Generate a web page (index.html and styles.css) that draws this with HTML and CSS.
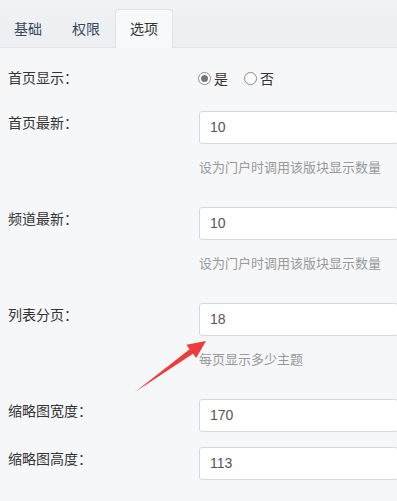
FILE: index.html
```html
<!DOCTYPE html>
<html lang="zh-CN">

<head>
 <meta charset="UTF-8">
 <meta name="viewport" content="width=device-width, initial-scale=1.0">
 <title>版块设置 - 选项</title>
 <link rel="stylesheet" href="styles.css">
</head>

<body>
 <div class="tabs">
  <div class="tab">基础</div>
  <div class="tab">权限</div>
  <div class="tab active">选项</div>
 </div>

 <div class="form">
  <!-- 首页显示 -->
  <div class="row row-radio">
   <div class="label">首页显示：</div>
   <div class="control radios">
    <span class="radio checked"></span><span class="radio-text">是</span>
    <span class="radio"></span><span class="radio-text">否</span>
   </div>
  </div>

  <div class="row with-help">
   <div class="label">首页最新：</div>
   <div class="control">
    <div class="input">10</div>
    <div class="help">设为门户时调用该版块显示数量</div>
   </div>
  </div>

  <div class="row with-help">
   <div class="label">频道最新：</div>
   <div class="control">
    <div class="input">10</div>
    <div class="help">设为门户时调用该版块显示数量</div>
   </div>
  </div>

  <div class="row with-help">
   <div class="label">列表分页：</div>
   <div class="control">
    <div class="input">18</div>
    <div class="help">每页显示多少主题</div>
   </div>
  </div>

  <div class="row">
   <div class="label">缩略图宽度：</div>
   <div class="control">
    <div class="input">170</div>
   </div>
  </div>

  <div class="row">
   <div class="label">缩略图高度：</div>
   <div class="control">
    <div class="input">113</div>
   </div>
  </div>
 </div>

 <!-- annotation arrow -->
 <svg class="arrow" width="397" height="501" viewBox="0 0 397 501">
  <polygon points="135,392 189.6,349.3 186.4,344.8 206,341 196.2,358 193,353.7" fill="#ee3b3b" />
 </svg>
</body>

</html>
```

FILE: styles.css
```css
body {
 margin: 0;
 background: #f6f7f9;
 font-family: "Liberation Sans", "Noto Sans CJK SC", sans-serif;
 font-size: 14px;
 color: #333;
 overflow: hidden;
}

.tabs {
 display: flex;
 align-items: flex-end;
 height: 48px;
 background: linear-gradient(#f1f2f4, #eceef1);
 border-bottom: 1px solid #e3e5e8;
 box-sizing: border-box;
}

.tab {
 width: 58px;
 height: 38px;
 line-height: 38px;
 text-align: center;
 color: #34495e;
 box-sizing: border-box;
 border: 1px solid transparent;
 border-bottom: none;
}

.tab:first-child {
 width: 57px;
 padding-right: 1px;
}

.tab.active {
 background: #f8f9fb;
 border-color: #e1e3e6;
 border-radius: 4px 4px 0 0;
 color: #333;
 height: 39px;
 margin-bottom: -1px;
}

.form {
 padding: 20px 0 0 8px;
}

.row {
 display: flex;
 margin-bottom: 15px;
}

.row.with-help {
 margin-bottom: 29px;
}

.row-radio {
 margin-bottom: 23px;
}

.label {
 width: 191px;
 flex: none;
 line-height: 20px;
 padding-top: 2px;
}

.row-radio .label {
 padding-top: 0;
}

.control {
 flex: 1;
 min-width: 0;
}

.radios {
 display: flex;
 align-items: center;
 height: 20px;
 margin-left: -1px;
}

.radio {
 width: 11px;
 height: 11px;
 border: 1px solid #8a8a8a;
 border-radius: 50%;
 background: #fff;
 position: relative;
 display: inline-block;
}

.radio.checked::after {
 content: "";
 position: absolute;
 left: 2px;
 top: 2px;
 width: 7px;
 height: 7px;
 border-radius: 50%;
 background: #777;
}

.radio-text {
 margin: 0 16px 0 3px;
}

.input {
 height: 33px;
 width: 199px;
 box-sizing: border-box;
 border: 1px solid #d6d8db;
 border-radius: 3px;
 background: #fff;
 padding-left: 10px;
 line-height: 31px;
 color: #555;
 font-size: 14px;
}

.help {
 margin-top: 14px;
 line-height: 20px;
 font-size: 13px;
 color: #999;
}

.arrow {
 position: absolute;
 left: 0;
 top: 0;
 pointer-events: none;
}
```
